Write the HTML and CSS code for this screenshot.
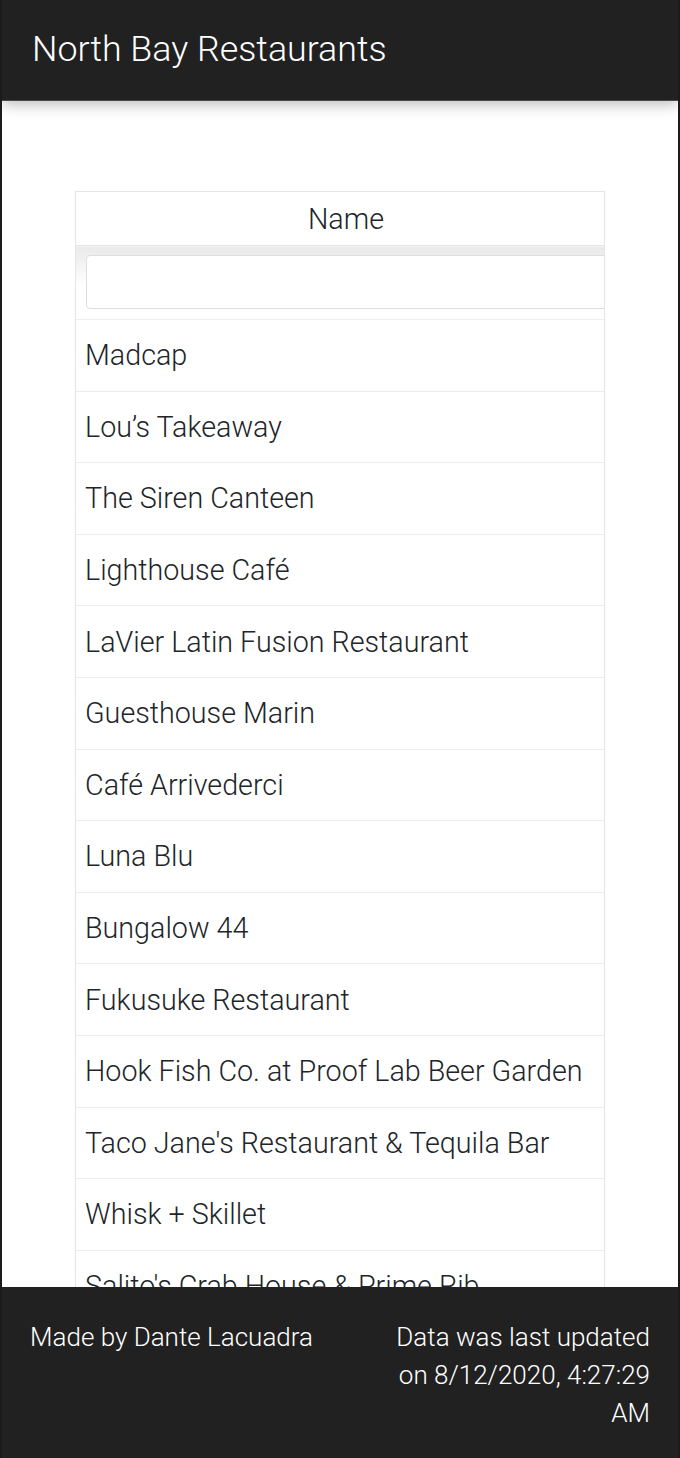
FILE: index.html
```html
<!DOCTYPE html>
<html lang="en">
<head>
<meta charset="utf-8">
<title>North Bay Restaurants</title>
<link rel="stylesheet" href="styles.css">
</head>
<body>
<header class="app-bar">
  <h1 class="app-title">North Bay Restaurants</h1>
</header>
<main class="content">
  <div class="table-wrap">
    <table class="list">
      <thead>
        <tr><th class="col-head">Name</th></tr>
        <tr><th class="filter-cell"><input class="filter-input" type="text"></th></tr>
      </thead>
      <tbody>
        <tr><td>Madcap</td></tr>
        <tr><td>Lou’s Takeaway</td></tr>
        <tr><td>The Siren Canteen</td></tr>
        <tr><td>Lighthouse Café</td></tr>
        <tr><td>LaVier Latin Fusion Restaurant</td></tr>
        <tr><td>Guesthouse Marin</td></tr>
        <tr><td>Café Arrivederci</td></tr>
        <tr><td>Luna Blu</td></tr>
        <tr><td>Bungalow 44</td></tr>
        <tr><td>Fukusuke Restaurant</td></tr>
        <tr><td>Hook Fish Co. at Proof Lab Beer Garden</td></tr>
        <tr><td>Taco Jane's Restaurant &amp; Tequila Bar</td></tr>
        <tr><td>Whisk + Skillet</td></tr>
        <tr><td>Salito's Crab House &amp; Prime Rib</td></tr>
        <tr><td>Sol Food</td></tr>
        <tr><td>Marin Brewing Company</td></tr>
      </tbody>
    </table>
  </div>
</main>
<footer class="app-footer">
  <div class="footer-left">Made by Dante Lacuadra</div>
  <div class="footer-right">Data was last updated on 8/12/2020, 4:27:29 AM</div>
</footer>
</body>
</html>
```

FILE: styles.css
```css
html {
  background: #1b1b1b;
}
body {
  margin: 0 2px;
  background: #ffffff;
  min-height: 100vh;
  font-family: Roboto, "Liberation Sans", sans-serif;
  font-weight: 300;
  color: #212529;
}
.app-bar {
  height: 100px;
  background: #212121;
  border-bottom: 1px solid #4a4a4a;
  box-shadow: 0 3px 14px rgba(0, 0, 0, 0.28);
  display: flex;
  align-items: center;
  padding: 0 30px;
  position: relative;
  z-index: 2;
}
.app-title {
  margin: 0;
  font-size: 35.8px;
  font-weight: 300;
  color: #ffffff;
  line-height: 1;
}
.content {
  padding: 90px 0 200px;
}
.table-wrap {
  width: 530px;
  margin: 0 auto;
  overflow: hidden;
  border: 1px solid #e4e4e4;
  box-sizing: border-box;
}
.list {
  width: 540px;
  border-collapse: collapse;
  font-size: 28.7px;
}
.col-head {
  font-weight: 300;
  text-align: center;
  height: 53px;
  padding: 0;
  border-bottom: 1px solid #e4e4e4;
  line-height: 36px;
}
.filter-cell {
  padding: 9px 0 10px 10px;
  background: linear-gradient(#e9e9e9 0, #ffffff 40px);
  border-bottom: 1px solid #eeeeee;
  text-align: left;
}
.filter-input {
  display: block;
  box-sizing: border-box;
  width: 530px;
  height: 54px;
  border: 1px solid #dedede;
  border-radius: 4px;
  background: #ffffff;
  font: inherit;
}
.list td {
  padding: 17.3px 10px 17.3px 9px;
  line-height: 36px;
  border-bottom: 1px solid #ececec;
  white-space: nowrap;
}
.app-footer {
  position: fixed;
  left: 2px;
  right: 2px;
  bottom: 0;
  height: 171px;
  box-sizing: border-box;
  background: #212121;
  color: #ffffff;
  display: flex;
  justify-content: space-between;
  align-items: flex-start;
  padding: 31px 28px 0;
  font-size: 26px;
  line-height: 38px;
  z-index: 3;
}
.footer-right {
  width: 262px;
  text-align: right;
}
```
